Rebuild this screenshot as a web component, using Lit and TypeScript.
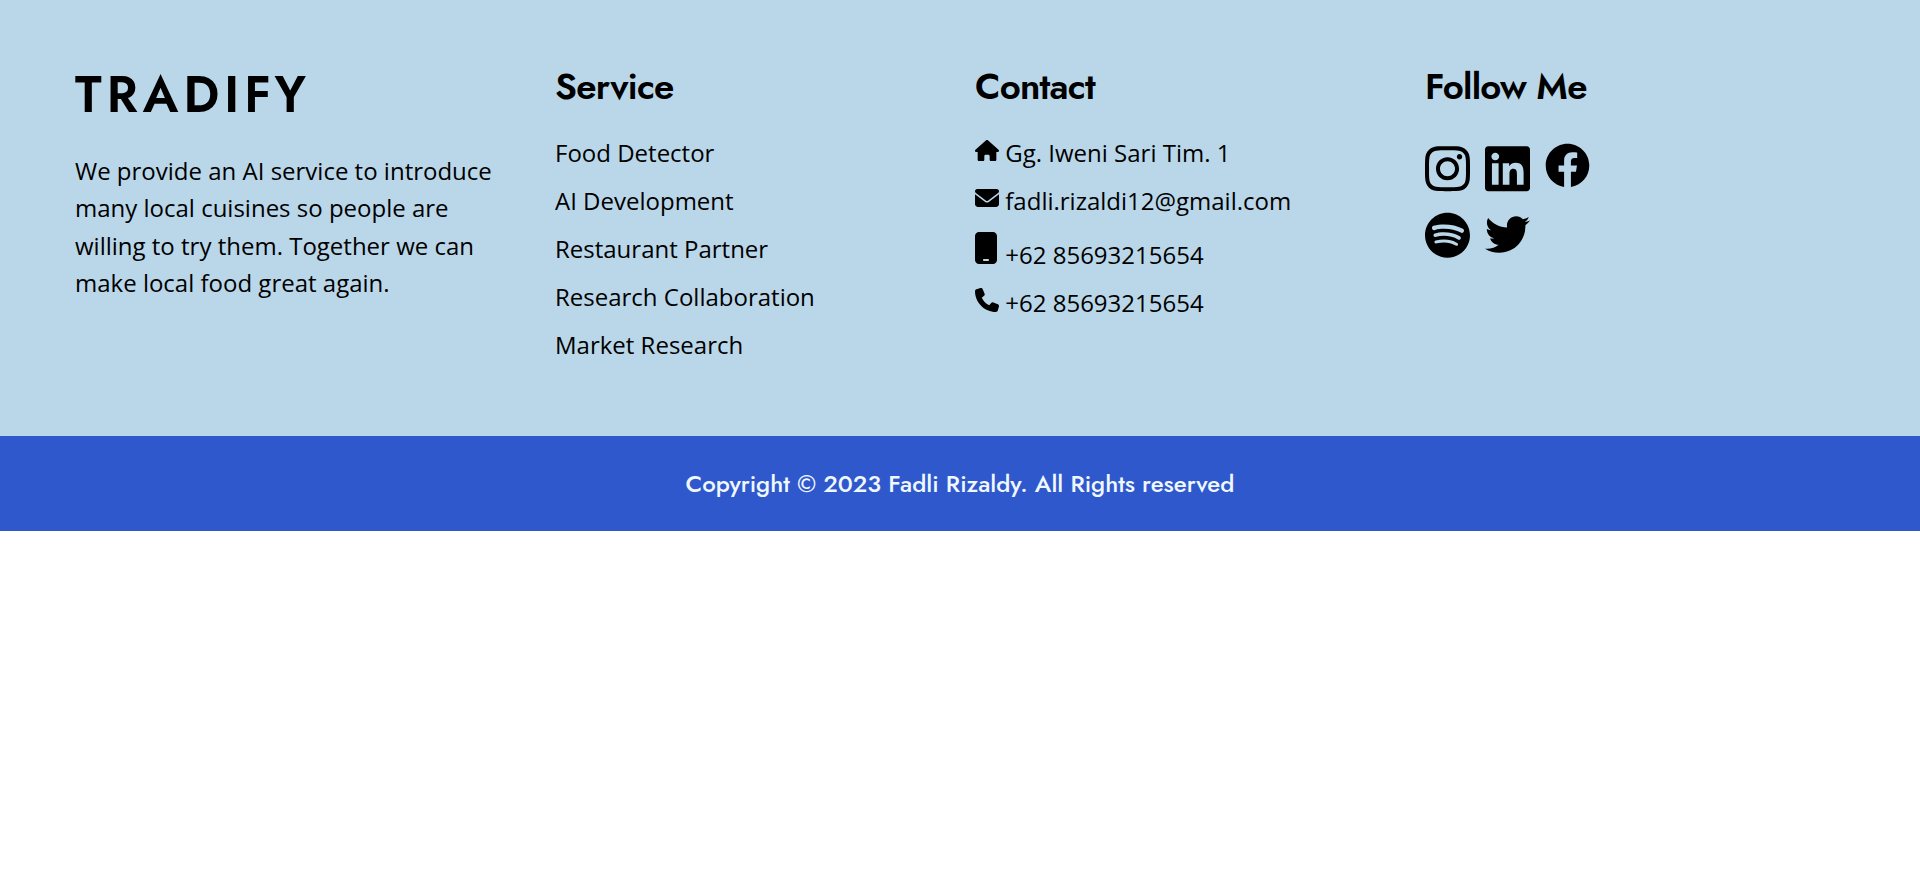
import { LitElement, html, svg, css } from "lit";
import { customElement } from "lit/decorators.js";

const services = [
  "Food Detector",
  "AI Development",
  "Restaurant Partner",
  "Research Collaboration",
  "Market Research",
];

const house = svg`<path d="M575.8 255.5c0 18-15 32.1-32 32.1h-32l.7 160.2c0 2.7-.2 5.4-.5 8.1V472c0 22.1-17.9 40-40 40H456c-1.1 0-2.2 0-3.3-.1c-1.4 .1-2.8 .1-4.2 .1H416 392c-22.1 0-40-17.9-40-40V448 384c0-17.7-14.3-32-32-32H256c-17.7 0-32 14.3-32 32v64 24c0 22.1-17.9 40-40 40H160 128.100c-1.500 0-3-.1-4.500-.2c-1.200 .1-2.400 .2-3.600 .2H104c-22.100 0-40-17.900-40-40V360c0-.9 0-1.900 .1-2.800V287.600H32c-18 0-32-14-32-32.100c0-9 3-17 10-24L266.400 8c7-7 15-8 22-8s15 2 21 7L564.800 231.500c8 7 12 15 11 24z"/>`;
const envelope = svg`<path d="M48 64C21.5 64 0 85.5 0 112c0 15.1 7.1 29.3 19.2 38.4L236.8 313.6c11.400 8.500 27 8.500 38.400 0L492.800 150.400c12.100-9.100 19.200-23.300 19.200-38.400c0-26.500-21.500-48-48-48H48zM0 176V384c0 35.300 28.700 64 64 64H448c35.300 0 64-28.700 64-64V176L294.400 339.200c-22.800 17.100-54 17.100-76.800 0L0 176z"/>`;
const mobile = svg`<path d="M16 64C16 28.700 44.700 0 80 0H304c35.300 0 64 28.700 64 64V448c0 35.300-28.700 64-64 64H80c-35.300 0-64-28.700-64-64V64zM144 448c0 8.800 7.200 16 16 16h64c8.800 0 16-7.200 16-16s-7.200-16-16-16H160c-8.800 0-16 7.200-16 16z"/>`;
const phone = svg`<path d="M164.900 24.600c-7.700-18.600-28-28.500-47.400-23.200l-88 24C12.100 30.200 0 46 0 64C0 311.400 200.600 512 448 512c18 0 33.800-12.100 38.600-29.500l24-88c5.300-19.400-4.600-39.700-23.200-47.400l-96-40c-16.300-6.800-35.200-2.100-46.300 11.600L304.700 368C234.300 334.700 177.300 277.700 144 207.300L193.300 167c13.700-11.200 18.400-30 11.600-46.300l-40-96z"/>`;

const contacts = [
  { kind: "house", box: "0 0 576 512", icon: house, label: "Gg. Iweni Sari Tim. 1" },
  { kind: "envelope", box: "0 0 512 512", icon: envelope, label: "fadli.rizaldi12@gmail.com" },
  { kind: "mobile", box: "16 0 352 512", icon: mobile, label: "+62 85693215654" },
  { kind: "phone", box: "0 0 512 512", icon: phone, label: "+62 85693215654" },
];

const socials = [
  {
    name: "Instagram",
    box: "0 0 448 512",
    icon: svg`<path d="M224.100 141c-63.600 0-114.900 51.300-114.900 114.900s51.300 114.900 114.900 114.900S339 319.500 339 255.900 287.700 141 224.100 141zm0 189.600c-41.100 0-74.700-33.500-74.700-74.700s33.500-74.700 74.700-74.700 74.700 33.500 74.700 74.700-33.600 74.700-74.700 74.700zm146.400-194.300c0 14.900-12 26.800-26.800 26.800-14.900 0-26.800-12-26.800-26.800s12-26.800 26.800-26.800 26.800 12 26.800 26.800zm76.100 27.200c-1.700-35.900-9.900-67.700-36.200-93.900-26.200-26.200-58-34.400-93.900-36.200-37-2.100-147.900-2.100-184.900 0-35.800 1.700-67.600 9.900-93.900 36.100s-34.400 58-36.200 93.900c-2.100 37-2.100 147.900 0 184.900 1.700 35.900 9.900 67.700 36.200 93.900s58 34.400 93.900 36.200c37 2.100 147.900 2.100 184.900 0 35.900-1.700 67.700-9.900 93.900-36.200 26.200-26.200 34.400-58 36.200-93.900 2.100-37 2.100-147.800 0-184.800zM398.800 388c-7.800 19.600-22.900 34.700-42.600 42.600-29.500 11.700-99.500 9-132.100 9s-102.700 2.600-132.100-9c-19.600-7.800-34.700-22.900-42.600-42.600-11.700-29.500-9-99.500-9-132.100s-2.600-102.700 9-132.100c7.800-19.600 22.900-34.700 42.600-42.600 29.500-11.700 99.500-9 132.100-9s102.700-2.600 132.100 9c19.600 7.800 34.700 22.900 42.600 42.600 11.700 29.500 9 99.500 9 132.100s2.700 102.700-9 132.100z"/>`,
  },
  {
    name: "LinkedIn",
    box: "0 0 448 512",
    icon: svg`<path d="M416 32H31.900C14.300 32 0 46.500 0 64.300v383.400C0 465.500 14.300 480 31.900 480H416c17.600 0 32-14.500 32-32.300V64.300c0-17.800-14.400-32.300-32-32.300zM135.400 416H69V202.200h66.500V416zm-33.200-243c-21.300 0-38.500-17.300-38.500-38.500S80.900 96 102.200 96c21.200 0 38.500 17.300 38.500 38.500 0 21.300-17.200 38.500-38.500 38.500zm282.100 243h-66.400V312c0-24.800-.5-56.700-34.500-56.700-34.600 0-39.900 27-39.900 54.900V416h-66.400V202.200h63.700v29.200h.9c8.900-16.800 30.600-34.500 62.900-34.500 67.200 0 79.700 44.300 79.700 101.900V416z"/>`,
  },
  {
    name: "Facebook",
    box: "0 0 512 512",
    icon: svg`<path d="M504 256C504 119 393 8 256 8S8 119 8 256c0 123.780 90.690 226.380 209.250 245V327.690h-63V256h63v-54.640c0-62.150 37-96.480 93.670-96.480 27.140 0 55.520 4.840 55.520 4.840v61h-31.280c-30.800 0-40.410 19.120-40.410 38.730V256h68.780l-11 71.690h-57.780V501C413.310 482.380 504 379.780 504 256z"/>`,
  },
  {
    name: "Spotify",
    box: "0 0 496 512",
    icon: svg`<path d="M248 8C111.100 8 0 119.100 0 256s111.100 248 248 248 248-111.100 248-248S384.900 8 248 8zm100.700 364.900c-4.200 0-6.800-1.300-10.700-3.600-62.400-37.600-135-39.200-206.700-24.500-3.900 1-9 2.600-11.900 2.600-9.700 0-15.800-7.700-15.800-15.800 0-10.300 6.100-15.200 13.600-16.800 81.900-18.100 165.600-16.500 237 26.200 6.100 3.900 9.700 7.400 9.700 16.500s-7.100 15.400-15.200 15.400zm26.900-65.600c-5.200 0-8.700-2.300-12.300-4.200-62.500-37-155.700-51.900-238.600-29.400-4.800 1.300-7.400 2.600-11.900 2.600-10.700 0-19.400-8.700-19.400-19.400s5.200-17.800 15.500-20.700c27.800-7.800 56.200-13.600 97.800-13.600 64.900 0 127.600 16.100 177 45.500 8.100 4.800 11.300 11 11.300 19.700-.1 10.800-8.500 19.500-19.400 19.500zm31-76.200c-5.200 0-8.400-1.300-12.900-3.900-71.200-42.500-198.500-52.700-280.900-29.700-3.600 1-8.100 2.600-12.900 2.600-13.200 0-23.300-10.300-23.300-23.600 0-13.600 8.400-21.300 17.400-23.900 35.200-10.300 74.600-15.200 117.500-15.200 73 0 149.500 15.200 205.400 47.800 7.800 4.500 12.900 10.700 12.900 22.600 0 13.600-11 23.300-23.200 23.300z"/>`,
  },
  {
    name: "Twitter",
    box: "0 0 512 512",
    icon: svg`<path d="M459.370 151.716c.325 4.548.325 9.097.325 13.645 0 138.720-105.583 298.558-298.558 298.558-59.452 0-114.680-17.219-161.137-47.106 8.447.974 16.568 1.299 25.340 1.299 49.055 0 94.213-16.568 130.274-44.832-46.132-.975-84.792-31.188-98.112-72.772 6.498.974 12.995 1.624 19.818 1.624 9.421 0 18.843-1.300 27.614-3.573-48.081-9.747-84.143-51.980-84.143-102.985v-1.299c13.969 7.797 30.214 12.670 47.431 13.319-28.264-18.843-46.781-51.005-46.781-87.391 0-19.492 5.197-37.360 14.294-52.954 51.655 63.675 129.300 105.258 216.365 109.807-1.624-7.797-2.599-15.918-2.599-24.040 0-57.828 46.782-104.934 104.934-104.934 30.213 0 57.502 12.670 76.670 33.137 23.715-4.548 46.456-13.320 66.599-25.340-7.798 24.366-24.366 44.833-46.132 57.827 21.117-2.273 41.584-8.122 60.426-16.243-14.292 20.791-32.161 39.308-52.628 54.253z"/>`,
  },
];

@customElement("app-root")
export class AppRoot extends LitElement {
  static styles = css`
    :host {
      display: block;
      min-height: 880px;
      background: #fff;
      color: #000;
      font: 400 24px/36px "Open Sans", sans-serif;
    }
    .footer {
      box-sizing: border-box;
      height: 436px;
      padding: 0 75px;
      background: #bad7e9;
      display: grid;
      grid-template-columns: 480px 420px 450px 180px;
      align-items: start;
    }
    h1, h2, p, ul { margin: 0; padding: 0; }
    h1, h2, .copyright { font-family: Jost, Lato, sans-serif; white-space: nowrap; }
    h1 {
      padding-top: 65px;
      font-size: 50px;
      line-height: 60px;
      font-weight: 600;
      letter-spacing: 5.1px;
    }
    .about {
      padding-top: 27px;
      width: 440px;
      line-height: 37.4px;
    }
    h2 {
      padding-top: 64px;
      font-size: 36.5px;
      line-height: 46px;
      font-weight: 600;
      letter-spacing: -0.75px;
    }
    ul { list-style: none; }
    .services { padding-top: 25px; display: grid; gap: 12px; }
    .contacts { padding-top: 25px; display: grid; gap: 12px; }
    .contact { display: grid; grid-template-columns: 30.3px auto; align-items: start; white-space: nowrap; }
    .glyph { display: block; fill: currentColor; }
    .house { width: 24px; height: 21.33px; margin-top: 5px; }
    .envelope { width: 24px; height: 24px; margin-top: 3px; }
    .mobile { width: 22px; height: 32px; margin-top: 1px; }
    .mobile + span { margin-top: 6px; }
    .phone { width: 24px; height: 24px; margin-top: 3px; }
    .socials {
      padding-top: 33px;
      display: grid;
      grid-template-columns: repeat(3, 45px);
      column-gap: 15px;
      row-gap: 17.6px;
      align-items: start;
    }
    .social { width: 45px; }
    .copyright {
      height: 95px;
      background: #2f58cd;
      color: aliceblue;
      display: flex;
      align-items: center;
      justify-content: center;
      font-size: 24px;
      font-weight: 500;
    }
  `;

  render() {
    return html`
      <footer>
        <div class="footer">
          <section>
            <h1>TRADIFY</h1>
            <p class="about">
              We provide an AI service to introduce<br />many local cuisines so people are<br />willing
              to try them. Together we can<br />make local food great again.
            </p>
          </section>
          <section>
            <h2>Service</h2>
            <ul class="services">
              ${services.map((s) => html`<li>${s}</li>`)}
            </ul>
          </section>
          <section>
            <h2>Contact</h2>
            <ul class="contacts">
              ${contacts.map(
                (c) => html`<li class="contact">
                  <svg class="glyph ${c.kind}" viewBox=${c.box}>${c.icon}</svg><span>${c.label}</span>
                </li>`
              )}
            </ul>
          </section>
          <section>
            <h2>Follow Me</h2>
            <div class="socials">
              ${socials.map(
                (s) => html`<svg class="glyph social" viewBox=${s.box} aria-label=${s.name}>${s.icon}</svg>`
              )}
            </div>
          </section>
        </div>
        <div class="copyright"><span>Copyright © 2023 Fadli Rizaldy. All Rights reserved</span></div>
      </footer>
    `;
  }
}
